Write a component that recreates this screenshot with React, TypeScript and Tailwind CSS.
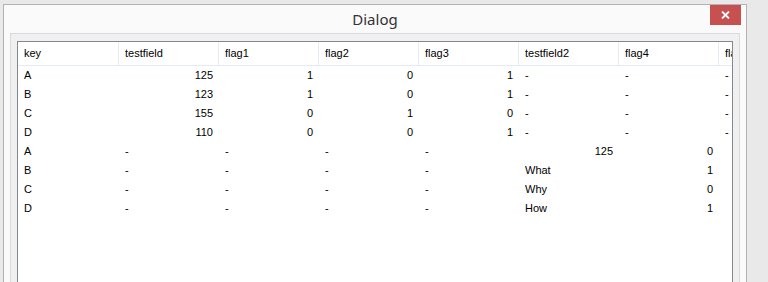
const columns = [
  { name: 'key' },
  { name: 'testfield' },
  { name: 'flag1' },
  { name: 'flag2' },
  { name: 'flag3' },
  { name: 'testfield2' },
  { name: 'flag4' },
  { name: 'flag5' },
]

// r = right aligned, l = left aligned, '' = empty cell
type Cell = { v: string; a: 'l' | 'r' }
const L = (v: string): Cell => ({ v, a: 'l' })
const R = (v: string): Cell => ({ v, a: 'r' })

const rows: Cell[][] = [
  [L('A'), R('125'), R('1'), R('0'), R('1'), L('-'), L('-'), L('-')],
  [L('B'), R('123'), R('1'), R('0'), R('1'), L('-'), L('-'), L('-')],
  [L('C'), R('155'), R('0'), R('1'), R('0'), L('-'), L('-'), L('-')],
  [L('D'), R('110'), R('0'), R('0'), R('1'), L('-'), L('-'), L('-')],
  [L('A'), L('-'), L('-'), L('-'), L('-'), R('125'), R('0'), L('')],
  [L('B'), L('-'), L('-'), L('-'), L('-'), L('What'), R('1'), L('')],
  [L('C'), L('-'), L('-'), L('-'), L('-'), L('Why'), R('0'), L('')],
  [L('D'), L('-'), L('-'), L('-'), L('-'), L('How'), R('1'), L('')],
]

export default function App() {
  return (
    <div className="h-[282px] w-[768px] overflow-hidden bg-[#e9e9e9] pl-[3px] pt-[4px]">
      {/* Window */}
      <div className="flex h-[300px] w-[744px] flex-col border border-[#b3b3b3] bg-[#fafafa]">
        {/* Title bar */}
        <div className="relative h-[28px] shrink-0 text-center text-[15px] leading-[28px] text-[#333]" style={{ fontFamily: '"Noto Sans", sans-serif' }}>
          Dialog
          <button className="absolute right-[5px] top-0 flex h-[20px] w-[31px] items-center justify-center bg-[#c75050]">
            <svg width="9" height="8" viewBox="0 0 9 8">
              <path d="M1 0.5 L8 7.5 M8 0.5 L1 7.5" stroke="white" strokeWidth="1.8" />
            </svg>
          </button>
        </div>

        {/* Client area */}
        <div className="mx-[6px] flex-1 border border-[#dadada] bg-[#f0f0f0] pl-[6px] pr-[6px] pt-[7px]">
          <div
            className="h-full overflow-hidden border border-[#828790] bg-white text-[11px] text-black"
            style={{ fontFamily: '"Liberation Sans", Arial, sans-serif' }}
          >
            <div className="grid w-[801px] grid-cols-[101px_repeat(7,100px)]">
              {columns.map((c) => (
                <div key={c.name} className="h-[24px] border-b border-r border-[#e5ebf3] pl-[6px] leading-[23px]">
                  {c.name}
                </div>
              ))}
              {rows.map((row, i) =>
                row.map((cell, j) => (
                  <div
                    key={`${i}-${j}`}
                    className={`h-[19px] leading-[19px] ${cell.a === 'r' ? 'pr-[6px] text-right' : 'pl-[6px] text-left'}`}
                  >
                    {cell.v}
                  </div>
                ))
              )}
            </div>
          </div>
        </div>
      </div>
    </div>
  )
}
